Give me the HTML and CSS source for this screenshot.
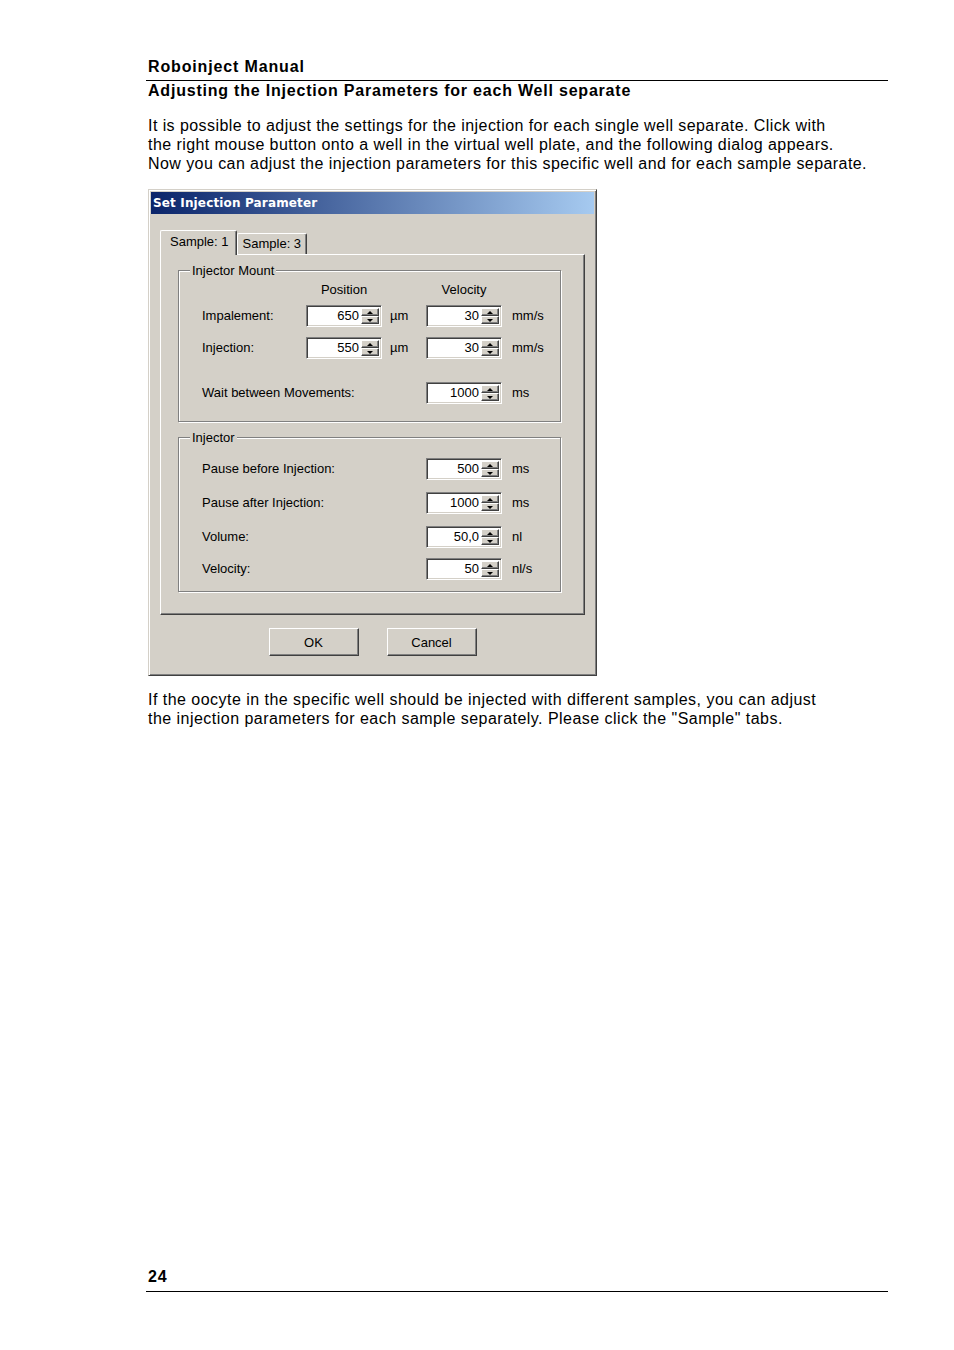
FILE: index.html
```html
<!DOCTYPE html>
<html lang="en">
<head>
<meta charset="utf-8">
<title>Roboinject Manual</title>
<link rel="stylesheet" href="styles.css">
</head>
<body>
<div class="page">
  <div class="running-head">Roboinject Manual</div>
  <h1 class="section-title">Adjusting the Injection Parameters for each Well separate</h1>
  <p class="para">It is possible to adjust the settings for the injection for each single well separate. Click with<br>the right mouse button onto a well in the virtual well plate, and the following dialog appears.<br>Now you can adjust the injection parameters for this specific well and for each sample separate.</p>

  <div class="dialog">
    <div class="titlebar">Set Injection Parameter</div>
    <div class="dialog-body">
      <div class="tabs">
        <div class="tab active">Sample: 1</div>
        <div class="tab">Sample: 3</div>
      </div>
      <div class="panel">
        <div class="group group-mount">
          <span class="legend">Injector Mount</span>
          <div class="row row-head">
            <span></span>
            <span class="colhead">Position</span>
            <span></span>
            <span class="colhead">Velocity</span>
            <span></span>
          </div>
          <div class="row r1">
            <span class="label">Impalement:</span>
            <div class="spin"><span class="val">650</span><span class="btns"><span class="sb"><i class="up"></i></span><span class="sb"><i class="down"></i></span></span></div>
            <span class="unit u1">µm</span>
            <div class="spin"><span class="val">30</span><span class="btns"><span class="sb"><i class="up"></i></span><span class="sb"><i class="down"></i></span></span></div>
            <span class="unit">mm/s</span>
          </div>
          <div class="row r2">
            <span class="label">Injection:</span>
            <div class="spin"><span class="val">550</span><span class="btns"><span class="sb"><i class="up"></i></span><span class="sb"><i class="down"></i></span></span></div>
            <span class="unit u1">µm</span>
            <div class="spin"><span class="val">30</span><span class="btns"><span class="sb"><i class="up"></i></span><span class="sb"><i class="down"></i></span></span></div>
            <span class="unit">mm/s</span>
          </div>
          <div class="row r3">
            <span class="label wide">Wait between Movements:</span>
            <div class="spin"><span class="val">1000</span><span class="btns"><span class="sb"><i class="up"></i></span><span class="sb"><i class="down"></i></span></span></div>
            <span class="unit">ms</span>
          </div>
        </div>

        <div class="group group-injector">
          <span class="legend">Injector</span>
          <div class="row2 q1">
            <span class="label">Pause before Injection:</span>
            <div class="spin"><span class="val">500</span><span class="btns"><span class="sb"><i class="up"></i></span><span class="sb"><i class="down"></i></span></span></div>
            <span class="unit">ms</span>
          </div>
          <div class="row2 q2">
            <span class="label">Pause after Injection:</span>
            <div class="spin"><span class="val">1000</span><span class="btns"><span class="sb"><i class="up"></i></span><span class="sb"><i class="down"></i></span></span></div>
            <span class="unit">ms</span>
          </div>
          <div class="row2 q3">
            <span class="label">Volume:</span>
            <div class="spin"><span class="val">50,0</span><span class="btns"><span class="sb"><i class="up"></i></span><span class="sb"><i class="down"></i></span></span></div>
            <span class="unit">nl</span>
          </div>
          <div class="row2 q4">
            <span class="label">Velocity:</span>
            <div class="spin"><span class="val">50</span><span class="btns"><span class="sb"><i class="up"></i></span><span class="sb"><i class="down"></i></span></span></div>
            <span class="unit">nl/s</span>
          </div>
        </div>
      </div>
      <div class="buttons">
        <button class="btn" type="button">OK</button>
        <button class="btn" type="button">Cancel</button>
      </div>
    </div>
  </div>

  <p class="para para-after">If the oocyte in the specific well should be injected with different samples, you can adjust<br>the injection parameters for each sample separately. Please click the "Sample" tabs.</p>

  <div class="footer">24</div>
</div>
</body>
</html>
```

FILE: styles.css
```css
html, body {
  margin: 0;
  padding: 0;
  background: #fff;
}

.page {
  width: 742px;
  height: 1292px;
  margin-left: 146px;
  padding-top: 57px;
  box-sizing: border-box;
  display: flex;
  flex-direction: column;
  align-items: flex-start;
  font-family: "Liberation Sans", Arial, sans-serif;
  font-size: 16px;
  line-height: 19px;
  color: #000;
}

.running-head {
  align-self: stretch;
  font-weight: bold;
  letter-spacing: 0.85px;
  padding: 0 2px 4px;
  border-bottom: 1px solid #000;
}

.section-title {
  margin: 0;
  padding: 0 2px;
  font-size: 16px;
  line-height: 19px;
  font-weight: bold;
  letter-spacing: 0.79px;
  white-space: nowrap;
}

.para {
  margin: 16px 0 0;
  padding: 0 2px;
  letter-spacing: 0.43px;
  white-space: nowrap;
}

.para-after {
  margin-top: 14px;
  letter-spacing: 0.47px;
}

.footer {
  align-self: stretch;
  margin-top: auto;
  font-weight: bold;
  letter-spacing: 0.8px;
  padding: 0 2px 5px;
  border-bottom: 1px solid #000;
}

/* ---------- dialog ---------- */
.dialog {
  margin: 16px 0 0 2px;
  width: 449px;
  height: 487px;
  box-sizing: border-box;
  padding: 2px;
  background: #d4d0c8;
  border: 1px solid;
  border-color: #d4d0c8 #404040 #404040 #d4d0c8;
  box-shadow: inset 1px 1px 0 #fff, inset -1px -1px 0 #808080;
  font-family: "Liberation Sans", Arial, sans-serif;
  font-size: 13px;
  line-height: 16px;
  letter-spacing: 0;
  color: #000;
}

.titlebar {
  height: 22px;
  line-height: 22px;
  padding-left: 2px;
  background: linear-gradient(to right, #0a246a, #a6caf0);
  color: #fff;
  font-family: "DejaVu Sans", Verdana, sans-serif;
  font-weight: bold;
  font-size: 12px;
  letter-spacing: 0.15px;
  white-space: nowrap;
}

.dialog-body {
  padding: 16px 9px 0 9px;
}

.tabs {
  display: flex;
  align-items: flex-end;
  height: 24px;
  position: relative;
  z-index: 1;
}

.tab {
  height: 21px;
  box-sizing: border-box;
  padding: 0 5px 0 5px;
  line-height: 20px;
  background: #d4d0c8;
  border-top: 1px solid #fff;
  border-left: 1px solid #fff;
  border-right: 1px solid #404040;
  box-shadow: inset -1px 0 0 #808080;
  border-radius: 2px 2px 0 0;
  white-space: nowrap;
}

.tab.active {
  height: 25px;
  margin-bottom: -1px;
  padding: 0 7px 0 9px;
  line-height: 22px;
}

.panel {
  height: 361px;
  box-sizing: border-box;
  border-top: 1px solid #fff;
  border-left: 1px solid #fff;
  border-right: 1px solid #404040;
  border-bottom: 1px solid #404040;
  box-shadow: inset -1px -1px 0 #808080;
  padding: 15px 23px 0 17px;
}

.group {
  position: relative;
  box-sizing: border-box;
  border: 1px solid #808080;
  box-shadow: 1px 1px 0 #fff, inset 1px 1px 0 #fff;
  padding-left: 23px;
}

.group-mount {
  height: 152px;
  padding-top: 11px;
}

.group-injector {
  height: 155px;
  margin-top: 15px;
  padding-top: 20px;
}

.legend {
  position: absolute;
  top: -8px;
  left: 11px;
  padding: 0 2px;
  background: #d4d0c8;
  line-height: 16px;
  white-space: nowrap;
}

.row {
  display: grid;
  grid-template-columns: 104px 76px 44px 76px auto;
  align-items: center;
  height: 22px;
}

.row-head {
  height: 16px;
}

.colhead {
  text-align: center;
}

.r1 { margin-top: 7px; }
.r2 { margin-top: 10px; }
.r3 {
  margin-top: 23px;
  grid-template-columns: 224px 76px auto;
}

.row2 {
  display: grid;
  grid-template-columns: 224px 76px auto;
  align-items: center;
  height: 22px;
}

.q2, .q3 { margin-top: 12px; }
.q4 { margin-top: 10px; }

.label {
  white-space: nowrap;
}

.unit {
  padding-left: 10px;
  white-space: nowrap;
}

.unit.u1 {
  padding-left: 8px;
}

/* spinner */
.spin {
  display: flex;
  width: 76px;
  height: 22px;
  box-sizing: border-box;
  background: #fff;
  border: 1px solid;
  border-color: #808080 #fff #fff #808080;
  box-shadow: inset 1px 1px 0 #404040, inset -1px -1px 0 #d4d0c8;
  padding: 2px;
}

.val {
  flex: 1;
  text-align: right;
  padding-right: 2px;
  line-height: 16px;
}

.btns {
  display: flex;
  flex-direction: column;
  width: 18px;
}

.sb {
  flex: 1;
  display: flex;
  align-items: center;
  justify-content: center;
  background: #d4d0c8;
  border: 1px solid;
  border-color: #fff #404040 #404040 #fff;
  box-shadow: inset -1px -1px 0 #808080;
  box-sizing: border-box;
}

.up, .down {
  width: 0;
  height: 0;
  border-left: 3px solid transparent;
  border-right: 3px solid transparent;
}

.up { border-bottom: 3px solid #000; }
.down { border-top: 3px solid #000; }

/* buttons */
.buttons {
  display: flex;
  justify-content: center;
  gap: 28px;
  margin-top: 13px;
}

.btn {
  width: 90px;
  height: 28px;
  margin: 0;
  padding: 0;
  background: #d4d0c8;
  border: 1px solid;
  border-color: #fff #404040 #404040 #fff;
  box-shadow: inset -1px -1px 0 #808080;
  font-family: "Liberation Sans", Arial, sans-serif;
  font-size: 13px;
  color: #000;
  border-radius: 0;
}
```
